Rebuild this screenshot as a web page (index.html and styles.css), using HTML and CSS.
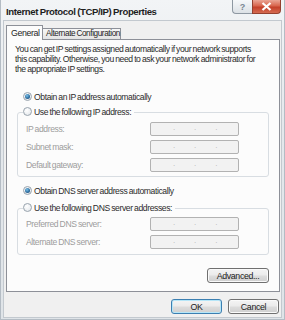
FILE: index.html
```html
<!DOCTYPE html>
<html>
<head>
<meta charset="utf-8">
<link rel="stylesheet" href="styles.css">
</head>
<body>
<div class="window">
  <div class="titlebar">
    <span class="title">Internet Protocol (TCP/IP) Properties</span>
    <div class="caption">
      <span class="cap-btn help">?</span>
      <span class="cap-btn close">
        <svg width="11" height="9" viewBox="0 0 11 9"><path d="M1.5 1 L9.5 8 M9.5 1 L1.5 8" stroke="#fff" stroke-width="2.2" fill="none"/></svg>
      </span>
    </div>
  </div>
  <div class="client">
    <div class="tabs">
      <span class="tab active">General</span>
      <span class="tab inactive">Alternate Configuration</span>
    </div>
    <div class="panel">
      <p class="intro">You can get IP settings assigned automatically if your network supports<br>this capability. Otherwise, you need to ask your network administrator for<br>the appropriate IP settings.</p>

      <div class="radio-row first"><span class="radio checked"></span>Obtain an IP address automatically</div>
      <div class="group">
        <div class="radio-row legend"><span class="radio"></span>Use the following IP address:</div>
        <div class="field"><span class="label">IP address:</span><span class="ipbox"><i>.</i><i>.</i><i>.</i></span></div>
        <div class="field"><span class="label">Subnet mask:</span><span class="ipbox"><i>.</i><i>.</i><i>.</i></span></div>
        <div class="field"><span class="label">Default gateway:</span><span class="ipbox"><i>.</i><i>.</i><i>.</i></span></div>
      </div>

      <div class="radio-row dns"><span class="radio checked"></span>Obtain DNS server address automatically</div>
      <div class="group group-dns">
        <div class="radio-row legend"><span class="radio"></span>Use the following DNS server addresses:</div>
        <div class="field"><span class="label">Preferred DNS server:</span><span class="ipbox"><i>.</i><i>.</i><i>.</i></span></div>
        <div class="field"><span class="label">Alternate DNS server:</span><span class="ipbox"><i>.</i><i>.</i><i>.</i></span></div>
      </div>

      <div class="adv-row"><button class="btn adv">Advanced...</button></div>
    </div>
    <div class="footer">
      <button class="btn default">OK</button>
      <button class="btn">Cancel</button>
    </div>
  </div>
</div>
</body>
</html>
```
FILE: styles.css
```css
* { box-sizing: border-box; }
html, body { margin: 0; padding: 0; }
body {
  width: 285px;
  height: 320px;
  overflow: hidden;
  font-family: "Liberation Sans", Arial, sans-serif;
  font-size: 8.6px;
  letter-spacing: -0.4px;
  word-spacing: -0.6px;
  color: #2b2b2b;
  background: #fff;
}
.window {
  width: 285px;
  height: 320px;
  background: linear-gradient(to bottom, #f2f4f6 0%, #e4e8ec 40%, #dfe4e8 100%);
  border: 1px solid #b4bcc4;
  border-top: none;
  display: flex;
  flex-direction: column;
  padding: 0 2px 2px 2px;
}
.titlebar {
  height: 20px;
  flex: none;
  display: flex;
  align-items: flex-start;
  justify-content: space-between;
}
.title {
  font-weight: bold;
  font-size: 9.6px;
  letter-spacing: -0.4px;
  word-spacing: -0.5px;
  line-height: 12px;
  color: #1e1e1e;
  margin: 6px 0 0 3px;
  white-space: nowrap;
}
.caption {
  display: flex;
  margin-right: 1px;
}
.cap-btn {
  height: 14px;
  display: flex;
  align-items: center;
  justify-content: center;
  border: 1px solid #8e98a2;
  border-top: none;
}
.help {
  width: 20px;
  border-radius: 0 0 0 4px;
  border-right: none;
  background: linear-gradient(to bottom, #f6f8fa, #dce1e6);
  color: #7a8692;
  font-size: 9px;
  letter-spacing: 0;
  font-weight: bold;
}
.close {
  width: 29px;
  border-radius: 0 0 4px 0;
  background: linear-gradient(to bottom, #eaa595 0%, #d8654d 45%, #c4402a 55%, #d46a50 100%);
  border-color: #94402f;
}
.client {
  flex: 1;
  background: #f0f0f0;
  border: 1px solid #c3c9cf;
  display: flex;
  flex-direction: column;
  padding: 4px 1px 3px 2px;
}
.tabs {
  display: flex;
  align-items: flex-end;
  height: 15px;
  position: relative;
  z-index: 1;
  margin-bottom: -1px;
  white-space: nowrap;
}
.tab {
  border: 1px solid #8d9098;
  border-bottom: none;
  color: #1e1e1e;
}
.tab.active {
  height: 15px;
  width: 37px;
  background: #fcfcfc;
  padding: 2px 0 0 4px;
  line-height: 11px;
  font-size: 8.8px;
}
.tab.inactive {
  height: 11px;
  width: 79px;
  margin-left: -1px;
  margin-bottom: 1px;
  padding-left: 3px;
  line-height: 10px;
  font-size: 8.2px;
  background: linear-gradient(to bottom, #f7f7f7, #e3e3e3);
}
.panel {
  flex: none;
  height: 253px;
  background: #fcfcfc;
  border: 1px solid #8d9098;
  padding: 4px 0 0 8px;
  display: flex;
  flex-direction: column;
}
.intro {
  margin: 0;
  line-height: 10px;
  white-space: nowrap;
}
.radio-row {
  display: flex;
  align-items: center;
  height: 11px;
  white-space: nowrap;
}
.radio-row.first { margin: 17px 0 0 8px; }
.radio {
  width: 9px;
  height: 9px;
  border-radius: 50%;
  border: 1px solid #98a3ad;
  background: radial-gradient(circle at 40% 35%, #ffffff 0%, #e4e8ec 85%);
  margin-right: 2px;
  flex: none;
  display: flex;
  align-items: center;
  justify-content: center;
}
.radio.checked::after {
  content: "";
  width: 5px;
  height: 5px;
  border-radius: 50%;
  background: radial-gradient(circle at 40% 35%, #7bc0e8 0%, #2a6a9c 60%, #173f66 100%);
}
.group {
  margin: 10px 0 0 2px;
  border: 1px solid #d8dde2;
  border-radius: 3px;
  width: 252px;
  height: 65px;
  padding: 0 29px 0 8px;
  display: flex;
  flex-direction: column;
}
.radio-row.legend {
  margin: -7px 0 0 -3px;
  background: #fcfcfc;
  align-self: flex-start;
  padding-right: 3px;
}
.field {
  display: flex;
  align-items: center;
  justify-content: space-between;
  height: 14px;
  margin-top: 4px;
}
.legend + .field { margin-top: 5px; }
.label {
  color: #9c9c9c;
}
.ipbox {
  width: 89px;
  height: 14px;
  border: 1px solid #b2b2b2;
  border-radius: 2px;
  background: #f2f2f2;
  display: flex;
  justify-content: space-between;
  padding: 0 21px 2px 22px;
  align-items: center;
}
.ipbox i {
  font-style: normal;
  font-size: 8px;
  color: #b4b4b4;
  line-height: 8px;
}
.radio-row.dns { margin: 8px 0 0 8px; }
.group-dns { height: 47px; margin-top: 12px; }
.group-dns .legend + .field { margin-top: 4px; }
.adv-row {
  display: flex;
  justify-content: flex-end;
  width: 252px;
  margin: 13px 0 0 2px;
}
.btn {
  font-family: "Liberation Sans", Arial, sans-serif;
  font-size: 8.8px;
  letter-spacing: -0.35px;
  color: #222;
  height: 15px;
  border: 1px solid #707070;
  border-radius: 3px;
  background: linear-gradient(to bottom, #f4f4f4 0%, #ebebeb 48%, #dddddd 52%, #cfcfcf 100%);
  padding: 0;
  display: flex;
  align-items: center;
  justify-content: center;
  box-shadow: inset 0 0 0 1px #fafafa;
}
.adv { width: 62px; }
.footer {
  display: flex;
  justify-content: flex-end;
  gap: 6px;
  margin-top: 7px;
  padding-right: 1px;
}
.footer .btn { width: 51px; }
.btn.default {
  border-color: #3c7fb1;
  box-shadow: inset 0 0 0 1px #b6e6f8;
}
```
